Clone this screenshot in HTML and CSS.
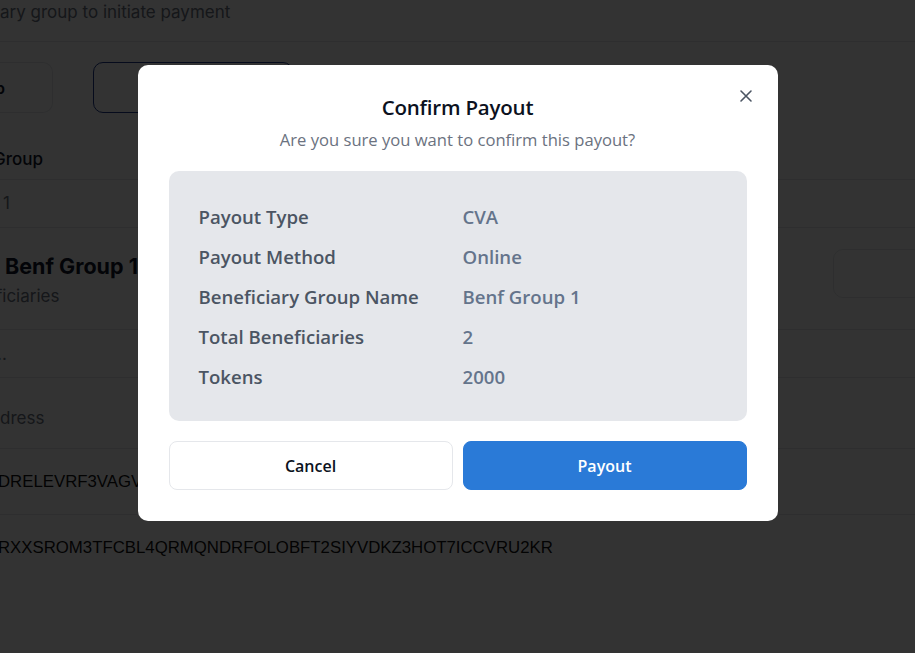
FILE: index.html
```html
<!DOCTYPE html>
<html>
<head>
<meta charset="utf-8">
<link rel="stylesheet" href="styles.css">
</head>
<body>
<div class="page">
  <div class="topbar"><span class="muted">ary group to initiate payment</span></div>
  <div class="btnrow">
    <div class="ghost-btn left">p</div>
    <div class="ghost-btn blue"></div>
  </div>
  <div class="table">
    <div class="th">Group</div>
    <div class="td">1</div>
  </div>
  <div class="group-head">
    <div>
      <div class="gtitle">Benf Group 1</div>
      <div class="muted gsub">ficiaries</div>
    </div>
    <div class="ghost-btn right"></div>
  </div>
  <div class="list">
    <div class="lrow r1 muted">..</div>
    <div class="lrow r2 muted">dress</div>
    <div class="lrow r3 addr">DRELEVRF3VAGV</div>
    <div class="lrow r4 addr nob">RXXSROM3TFCBL4QRMQNDRFOLOBFT2SIYVDKZ3HOT7ICCVRU2KR</div>
  </div>
</div>

<div class="overlay">
  <div class="modal">
    <button class="close" aria-label="Close">
      <svg width="16" height="16" viewBox="0 0 16 16"><path d="M3 3 L13 13 M13 3 L3 13" stroke="#4b5563" stroke-width="1.6" stroke-linecap="round" fill="none"/></svg>
    </button>
    <h2 class="title">Confirm Payout</h2>
    <p class="subtitle">Are you sure you want to confirm this payout?</p>
    <div class="info">
      <div class="irow"><span class="lbl">Payout Type</span><span class="val">CVA</span></div>
      <div class="irow"><span class="lbl">Payout Method</span><span class="val">Online</span></div>
      <div class="irow"><span class="lbl">Beneficiary Group Name</span><span class="val">Benf Group 1</span></div>
      <div class="irow"><span class="lbl">Total Beneficiaries</span><span class="val">2</span></div>
      <div class="irow"><span class="lbl">Tokens</span><span class="val">2000</span></div>
    </div>
    <div class="actions">
      <button class="btn cancel">Cancel</button>
      <button class="btn primary">Payout</button>
    </div>
  </div>
</div>
</body>
</html>
```

FILE: styles.css
```css
* { box-sizing: border-box; }
html, body { margin: 0; padding: 0; height: 100%; overflow: hidden; }
body { background: #ffffff; font-family: Inter, "Liberation Sans", sans-serif; color: #0f172a; }

.page { width: 915px; height: 653px; }
.muted { color: #6b7280; }
.topbar { height: 42px; border-bottom: 1px solid #e5e7eb; padding-top: 0; font-size: 17px; line-height: 24px; }
.btnrow { display: flex; gap: 40px; padding-top: 20px; height: 71px; }
.ghost-btn { height: 51px; border: 1px solid #e5e7eb; border-radius: 10px; font-size: 16px; font-weight: 600; display: flex; align-items: center; }
.ghost-btn.left { width: 54px; margin-left: -1px; border-left: none; border-radius: 0 10px 10px 0; justify-content: flex-start; text-indent: -4px; }
.ghost-btn.blue { width: 200px; border-color: #1e3a8a; }
.th { height: 67px; padding-top: 35px; font-size: 17px; font-weight: 500; border-bottom: 1px solid #e5e7eb; line-height: 22px; text-indent: -7px; }
.td { height: 48px; padding-top: 12px; font-size: 17px; color: #6b7280; border-bottom: 1px solid #e5e7eb; line-height: 22px; padding-left: 3px; }
.group-head { display: flex; justify-content: space-between; align-items: flex-start; height: 102px; border-bottom: 1px solid #e5e7eb; padding-top: 23px; }
.gtitle { font-size: 21.5px; font-weight: 700; line-height: 30px; padding-left: 5px; color: #0f172a; }
.gsub { font-size: 17px; line-height: 24px; margin-top: 3px; text-indent: -4px; }
.ghost-btn.right { width: 90px; height: 49px; margin-top: -2px; margin-right: -8px; }
.lrow { border-bottom: 1px solid #e5e7eb; font-size: 17px; display: flex; align-items: center; }
.r1 { height: 48px; text-indent: -3px; }
.r2 { height: 71px; padding-top: 10px; }
.r3 { height: 66px; }
.addr { font-family: "Liberation Sans", Arial, sans-serif; color: #111111; font-size: 16.8px; text-indent: -2px; }
.r4 { height: 66px; border-bottom: none; }

.overlay { position: fixed; inset: 0; background: rgba(0,0,0,0.8); display: flex; justify-content: center; align-items: flex-start; padding-top: 65px; }
.modal { position: relative; width: 640px; background: #ffffff; border-radius: 10px; padding: 28px 31px 31px; font-family: "Open Sans", "Noto Sans", sans-serif; display: flex; flex-direction: column; align-items: center; }
.close { position: absolute; top: 23px; right: 24px; width: 16px; height: 16px; padding: 0; border: none; background: transparent; display: flex; }
.title { margin: 0; font-size: 20.5px; font-weight: 600; line-height: 28px; color: #0b1120; letter-spacing: -0.2px; }
.subtitle { margin: 7px 0 0; font-size: 16.6px; line-height: 24px; color: #6b7280; }
.info { width: 100%; margin-top: 19px; background: #e5e7eb; border-radius: 10px; padding: 32px 30px 30px; display: flex; flex-direction: column; gap: 12px; }
.irow { display: flex; font-size: 18.6px; line-height: 28px; font-weight: 600; }
.lbl { width: 264px; color: #4b5563; }
.val { color: #64748b; }
.actions { width: 100%; display: flex; gap: 10px; margin-top: 20px; }
.btn { flex: 1; height: 49px; border-radius: 8px; font-family: "Open Sans", "Noto Sans", sans-serif; font-size: 16px; font-weight: 600; cursor: pointer; }
.cancel { background: #ffffff; border: 1px solid #e5e7eb; color: #0b1120; }
.primary { background: #2a7ad7; border: 1px solid #2a7ad7; color: #ffffff; }
```
